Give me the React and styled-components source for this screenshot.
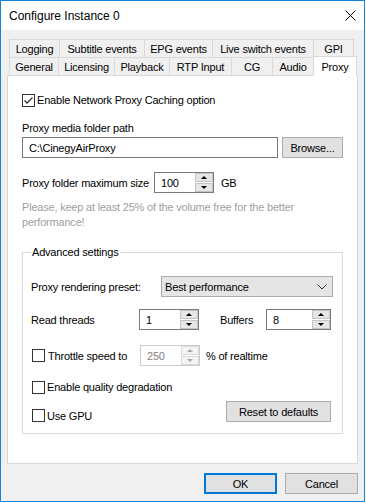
import styled, { createGlobalStyle } from 'styled-components';

const GlobalStyle = createGlobalStyle`
  html, body {
    margin: 0;
    padding: 0;
    background: #ffffff;
  }
  body {
    font-family: "Liberation Sans", Arial, sans-serif;
    font-size: 11px;
    letter-spacing: -0.2px;
    color: #000000;
  }
  * { box-sizing: border-box; }
`;

const topTabs = [
  { label: 'Logging', width: 51 },
  { label: 'Subtitle events', width: 86 },
  { label: 'EPG events', width: 69 },
  { label: 'Live switch events', width: 102 },
  { label: 'GPI', width: 41 },
];

const bottomTabs = [
  { label: 'General', width: 50 },
  { label: 'Licensing', width: 57 },
  { label: 'Playback', width: 56 },
  { label: 'RTP Input', width: 63 },
  { label: 'CG', width: 42 },
  { label: 'Audio', width: 42 },
  { label: 'Proxy', width: 44, active: true },
];

const Window = styled.div`
  width: 365px;
  height: 502px;
  border: 1px solid #1883d7;
  display: flex;
  flex-direction: column;
  background: #f0f0f0;
`;

const TitleBar = styled.div`
  height: 30px;
  background: #ffffff;
  display: flex;
  align-items: center;
  justify-content: space-between;
  padding: 0 8px 0 8px;
`;

const Title = styled.span`
  font-size: 12px;
  letter-spacing: 0;
  padding-top: 1px;
`;

const Body = styled.div`
  flex: 1;
  display: flex;
  flex-direction: column;
  padding: 9px 6px 7px 6px;
`;

const TabRow = styled.div`
  display: flex;
  height: 18px;
  padding-left: 2px;
  position: relative;
  z-index: ${p => p.$front ? 2 : 1};
`;

const Tab = styled.div`
  width: ${p => p.$w}px;
  margin-left: -1px;
  &:first-child { margin-left: 0; }
  height: ${p => p.$active ? 20 : 18}px;
  margin-top: ${p => p.$active ? -1 : 0}px;
  border: 1px solid #d9d9d9;
  border-bottom: none;
  background: ${p => p.$active ? '#ffffff' : '#f0f0f0'};
  display: flex;
  align-items: center;
  justify-content: center;
  white-space: nowrap;
  padding-top: ${p => p.$active ? 0 : 1}px;
  position: relative;
`;

const Panel = styled.div`
  height: 389px;
  background: #ffffff;
  border: 1px solid #d9d9d9;
  padding: 0 14px 0 14px;
  display: flex;
  flex-direction: column;
`;

const Row = styled.div`
  display: flex;
  align-items: ${p => p.$align || 'center'};
  height: ${p => p.$h || 14}px;
  margin-top: ${p => p.$mt || 0}px;
  gap: ${p => p.$gap || 0}px;
`;

const Label = styled.span`
  width: ${p => (p.$w ? `${p.$w}px` : 'auto')};
  flex-shrink: 0;
  white-space: nowrap;
  margin-left: ${p => p.$ml || 0}px;
`;

const Hint = styled.p`
  margin: 7px 0 0 0;
  line-height: 15px;
  color: #a0a0a0;
`;

const TextBox = styled.div`
  flex: 1;
  height: 21px;
  border: 1px solid #7a7a7a;
  background: #ffffff;
  display: flex;
  align-items: center;
  padding-left: 6px;
`;

const Button = styled.div`
  width: ${p => p.$w}px;
  height: 21px;
  flex-shrink: 0;
  background: #e1e1e1;
  border: ${p => p.$default ? '2px solid #0078d7' : '1px solid #adadad'};
  display: flex;
  align-items: center;
  justify-content: center;
  align-self: center;
  margin-right: ${p => p.$mr || 0}px;
  margin-left: ${p => p.$ml || 0};
`;

const SpinBox = styled.div`
  width: ${p => p.$w}px;
  height: 21px;
  flex-shrink: 0;
  display: flex;
  border: 1px solid ${p => p.$disabled ? '#cccccc' : '#7a7a7a'};
  background: #ffffff;
`;

const SpinValue = styled.span`
  flex: 1;
  display: flex;
  align-items: center;
  padding-left: 6px;
  color: ${p => p.$disabled ? '#838383' : '#000'};
`;

const SpinButtons = styled.div`
  width: 18px;
  display: flex;
  flex-direction: column;
  gap: 1px;
`;

const SpinButton = styled.div`
  flex: 1;
  background: ${p => p.$disabled ? '#f4f4f4' : '#e6e6e6'};
  border: 1px solid ${p => p.$disabled ? '#dadada' : '#c4c4c4'};
  display: flex;
  align-items: center;
  justify-content: center;

  &::after {
    content: '';
    width: 0;
    height: 0;
    border-left: 3px solid transparent;
    border-right: 3px solid transparent;
    ${p => p.$up ? 'border-bottom' : 'border-top'}: 3px solid ${p => p.$disabled ? '#a8a8a8' : '#000'};
  }
`;

const CheckBox = styled.div`
  width: 13px;
  height: 13px;
  flex-shrink: 0;
  border: 1px solid #333333;
  background: #ffffff;
  display: flex;
  align-items: center;
  justify-content: center;
  margin-right: ${p => p.$mr || 2}px;
  margin-left: ${p => p.$ml || 0}px;
`;

const Group = styled.fieldset`
  margin: 15px 0 0 0;
  padding: 17px 9px 11px 8px;
  border: 1px solid #dcdcdc;
  min-width: 0;
`;

const Legend = styled.legend`
  padding: 0 1px;
  margin-left: 0;
  height: 14px;
  line-height: 14px;
`;

const Combo = styled.div`
  flex: 1;
  height: 21px;
  background: #e5e5e5;
  border: 1px solid #acacac;
  display: flex;
  align-items: center;
  justify-content: space-between;
  padding: 0 5px 0 3px;
`;

const Footer = styled.div`
  display: flex;
  justify-content: flex-end;
  gap: 8px;
  margin-top: 9px;
`;

const Spinner = ({ value, width, disabled }) => (
  <SpinBox $w={width} $disabled={disabled}>
    <SpinValue $disabled={disabled}>{value}</SpinValue>
    <SpinButtons>
      <SpinButton $up $disabled={disabled} />
      <SpinButton $disabled={disabled} />
    </SpinButtons>
  </SpinBox>
);

const Check = ({ checked, ml, mr }) => (
  <CheckBox $ml={ml} $mr={mr}>
    {checked && (
      <svg width="11" height="11" viewBox="0 0 11 11">
        <path d="M1.5 5.5 L4 8 L9.5 2.5" fill="none" stroke="#333" strokeWidth="1.3" />
      </svg>
    )}
  </CheckBox>
);

export default function App() {
  return (
    <>
      <GlobalStyle />
      <Window>
        <TitleBar>
          <Title>Configure Instance 0</Title>
          <svg width="11" height="11" viewBox="0 0 11 11">
            <path d="M0.5 0.5 L10.5 10.5 M10.5 0.5 L0.5 10.5" stroke="#000" strokeWidth="1" />
          </svg>
        </TitleBar>
        <Body>
          <TabRow>
            {topTabs.map(t => (
              <Tab key={t.label} $w={t.width}>{t.label}</Tab>
            ))}
          </TabRow>
          <TabRow $front>
            {bottomTabs.map(t => (
              <Tab key={t.label} $w={t.width} $active={t.active}>{t.label}</Tab>
            ))}
          </TabRow>
          <Panel>
            <Row $mt={17}>
              <Check checked />
              <Label>Enable Network Proxy Caching option</Label>
            </Row>
            <Row $mt={14}>
              <Label>Proxy media folder path</Label>
            </Row>
            <Row $mt={2} $h={21} $gap={4}>
              <TextBox>C:\CinegyAirProxy</TextBox>
              <Button $w={61}>Browse...</Button>
            </Row>
            <Row $mt={14} $h={21}>
              <Label $w={132}>Proxy folder maximum size</Label>
              <Spinner value="100" width={60} />
              <Label $ml={7}>GB</Label>
            </Row>
            <Hint>
              Please, keep at least 25% of the volume free for the better performance!
            </Hint>
            <Group>
              <Legend>Advanced settings</Legend>
              <Row $h={21}>
                <Label $w={130}>Proxy rendering preset:</Label>
                <Combo>
                  <span>Best performance</span>
                  <svg width="10" height="6" viewBox="0 0 10 6">
                    <path d="M0.5 0.5 L5 5 L9.5 0.5" fill="none" stroke="#333" strokeWidth="1" />
                  </svg>
                </Combo>
              </Row>
              <Row $mt={12} $h={21}>
                <Label $w={108}>Read threads</Label>
                <Spinner value="1" width={60} />
                <Label $w={46} $ml={21}>Buffers</Label>
                <Spinner value="8" width={65} />
              </Row>
              <Row $mt={15} $h={21}>
                <Check ml={1} mr={3} />
                <Label $w={92}>Throttle speed to</Label>
                <Spinner value="250" width={60} disabled />
                <Label $ml={6}>% of realtime</Label>
              </Row>
              <Row $mt={14} $h={14}>
                <Check ml={1} mr={2} />
                <Label>Enable quality degradation</Label>
              </Row>
              <Row $mt={7} $h={21} $align="flex-end">
                <Check ml={1} mr={2} />
                <Label>Use GPU</Label>
                <Button $w={105} $ml="auto" $mr={2}>Reset to defaults</Button>
              </Row>
            </Group>
          </Panel>
          <Footer>
            <Button $w={73} $default>OK</Button>
            <Button $w={73}>Cancel</Button>
          </Footer>
        </Body>
      </Window>
    </>
  );
}
